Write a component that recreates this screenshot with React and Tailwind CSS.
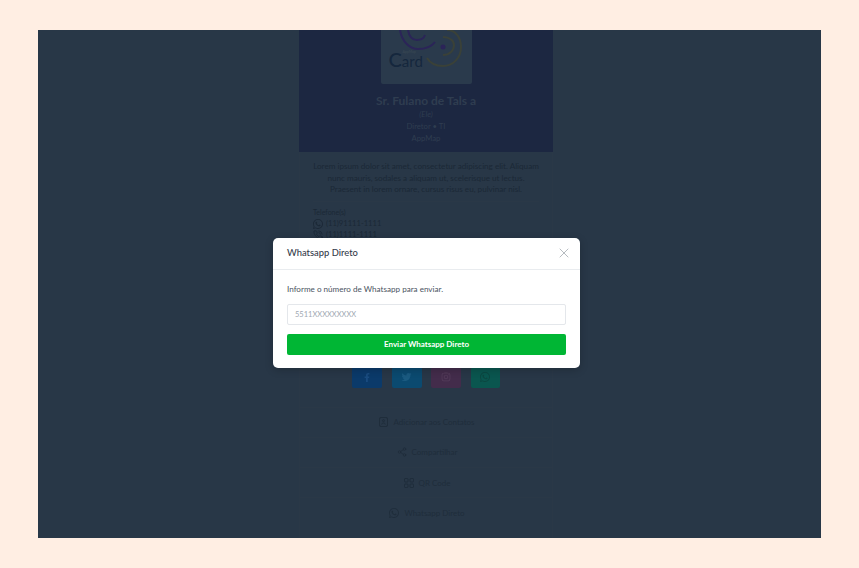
import React from "react";
import { BsWhatsapp } from "react-icons/bs";
import { FaFacebookF, FaTwitter, FaInstagram } from "react-icons/fa";
import { LuShare2, LuPhoneCall, LuX } from "react-icons/lu";

const font = { fontFamily: 'Lato, "Open Sans", sans-serif' };

function Logo() {
  return (
    <div className="relative w-[91px] h-[54px] bg-[#2a3a4c] rounded-b-[2px] overflow-hidden">
      <svg className="absolute left-0 top-0" width="91" height="54" viewBox="0 0 91 54" fill="none">
        <path d="M19 0 C21 12 29 19 37 19 C45 19 51 16 54 12" stroke="#2b2458" strokeWidth="2" />
        <path d="M27 0 C28 6 31 10 36 10 C40 10 43 8 44 5" stroke="#2b2458" strokeWidth="2" />
        <path d="M66 0 C75 0 80 8 80 17 C80 28 72 36 62 36 C55 36 49 33 46 28" stroke="#3a4138" strokeWidth="2" />
        <path d="M62 7 C69 7 73 11 73 15 C73 21 68 25 62 25" stroke="#3a4138" strokeWidth="2" />
        <circle cx="62" cy="17" r="2.500" fill="#2b2458" />
      </svg>
      <div className="absolute left-[8px] top-[21px] flex items-baseline leading-none text-[#15273d]">
        <span className="text-[20px] font-medium leading-[17px]">C</span>
        <span className="text-[15px] leading-[15px]">ard</span>
      </div>
      <span className="absolute left-[22px] top-[20px] text-[3.500px] leading-[4px] text-[#3b4a55]">AppMap</span>
    </div>
  );
}

function ContactIcon() {
  return (
    <svg width="9" height="10" viewBox="0 0 9 10" fill="none" stroke="currentColor" strokeWidth="1">
      <rect x="0.500" y="0.500" width="8" height="9" rx="1.500" />
      <circle cx="4.500" cy="3.700" r="1" />
      <path d="M2.700 7.500 C2.700 5.500 6.300 5.500 6.300 7.500" />
    </svg>
  );
}

function QrIcon() {
  return (
    <svg width="10" height="10" viewBox="0 0 10 10" fill="none" stroke="currentColor" strokeWidth="1">
      <rect x="0.500" y="0.500" width="3.500" height="3.500" rx="0.700" />
      <rect x="6" y="0.500" width="3.500" height="3.500" rx="0.700" />
      <rect x="0.500" y="6" width="3.500" height="3.500" rx="0.700" />
      <rect x="6" y="6" width="3.500" height="3.500" rx="0.700" />
    </svg>
  );
}

function Action({ icon, label }) {
  return (
    <div className="h-[30.250px] flex items-center justify-center gap-[5px] border-b border-[#2a3847] text-[#1f2d3b] text-[8px] pl-[2px] last:border-b-0">
      {icon}
      <span>{label}</span>
    </div>
  );
}

function Social({ bg, children, w = "w-[30px]" }) {
  return (
    <div className={`${w} h-[21px] rounded-[2px] flex items-center justify-center ${bg}`}>{children}</div>
  );
}

export default function App() {
  return (
    <div className="w-[859px] h-[568px] bg-[#ffeee3] pt-[30px] pb-[30px] px-[38px]" style={font}>
      <div className="relative w-[783px] h-[508px] bg-[#283747] overflow-hidden">
        <div className="ml-[261px] w-[254px] h-full flex flex-col border-x border-[#2a3847]">
          <div className="h-[122px] -mx-px bg-[#1c2741] flex flex-col items-center">
            <Logo />
            <div className="mt-[9px] text-[12px] leading-[15px] font-bold text-[#2f3d50]">Sr. Fulano de Tals a</div>
            <div className="mt-[1px] text-[7.700px] leading-[11px] italic text-[#2f3d50]">(Ele)</div>
            <div className="mt-px text-[7.700px] leading-[11px] text-[#2f3d50]">Diretor • TI</div>
            <div className="mt-px text-[7.700px] leading-[11px] text-[#2f3d50]">AppMap</div>
          </div>
          <div className="px-[13px] pt-[9px]">
            <p className="text-center text-[8.150px] leading-[11.500px] text-[#1b2836] pb-[5px] border-b border-[#2a3847] whitespace-nowrap">
              Lorem ipsum dolor sit amet, consectetur adipiscing elit. Aliquam<br />
              nunc mauris, sodales a aliquam ut, scelerisque ut lectus.<br />
              Praesent in lorem ornare, cursus risus eu, pulvinar nisl.
            </p>
            <div className="mt-[5px] text-[7px] leading-[11px] text-[#1b2836]">Telefone(s)</div>
            <div className="flex items-center gap-[3px] h-[11px] mt-[1px] text-[7.600px] text-[#1b2836]">
              <BsWhatsapp className="w-[10px] h-[10px]" />(11)91111-1111
            </div>
            <div className="flex items-center gap-[3px] h-[11px] text-[7.600px] text-[#1b2836]">
              <LuPhoneCall className="w-[10px] h-[10px]" />(11)1111-1111
            </div>
          </div>
          <div className="mt-[126px] flex justify-center gap-[9.500px]">
            <Social bg="bg-[#0b3a6a]"><FaFacebookF className="w-[8px] h-[9px] text-[#1a4c80]" /></Social>
            <Social bg="bg-[#0b4a70]"><FaTwitter className="w-[11px] h-[10px] text-[#1a5a80]" /></Social>
            <Social bg="bg-[#432c4b]"><FaInstagram className="w-[10px] h-[10px] text-[#553c5b]" /></Social>
            <Social bg="bg-[#0a564f]" w="w-[29px]"><BsWhatsapp className="w-[10px] h-[10px] text-[#0c4640]" /></Social>
          </div>
          <div className="mt-[19px] border-t border-[#2a3847]">
            <Action icon={<ContactIcon />} label="Adicionar aos Contatos" />
            <Action icon={<LuShare2 className="w-[10px] h-[10px]" />} label="Compartilhar" />
            <Action icon={<QrIcon />} label="QR Code" />
            <Action icon={<BsWhatsapp className="w-[10px] h-[10px]" />} label="Whatsapp Direto" />
          </div>
        </div>

        <div className="absolute left-[235px] top-[207.500px] w-[307px] h-[130.500px] bg-white rounded-[5px] shadow-[0_2px_8px_rgba(0,0,0,0.2)]">
          <div className="h-[32.500px] px-[14px] flex items-center justify-between border-b border-[#e9ecef]">
            <span className="text-[9.400px] font-medium text-[#343a4a]">Whatsapp Direto</span>
            <LuX className="w-[16px] h-[16px] mr-[-6px] text-[#a3a9b0]" strokeWidth={1.2} />
          </div>
          <div className="px-[14px] pt-[13px]">
            <p className="text-[8.100px] leading-[12px] text-[#4a5461]">Informe o número de Whatsapp para enviar.</p>
            <div className="mt-[9px] h-[21px] rounded-[2px] border border-[#e4e7eb] px-[7px] flex items-center text-[7.500px] text-[#a0a8b2]">5511XXXXXXXXX</div>
            <button className="mt-[8.500px] block w-full h-[21px] rounded-[2px] bg-[#00b634] text-white text-[8px] font-bold text-center">Enviar Whatsapp Direto</button>
          </div>
        </div>
      </div>
    </div>
  );
}
